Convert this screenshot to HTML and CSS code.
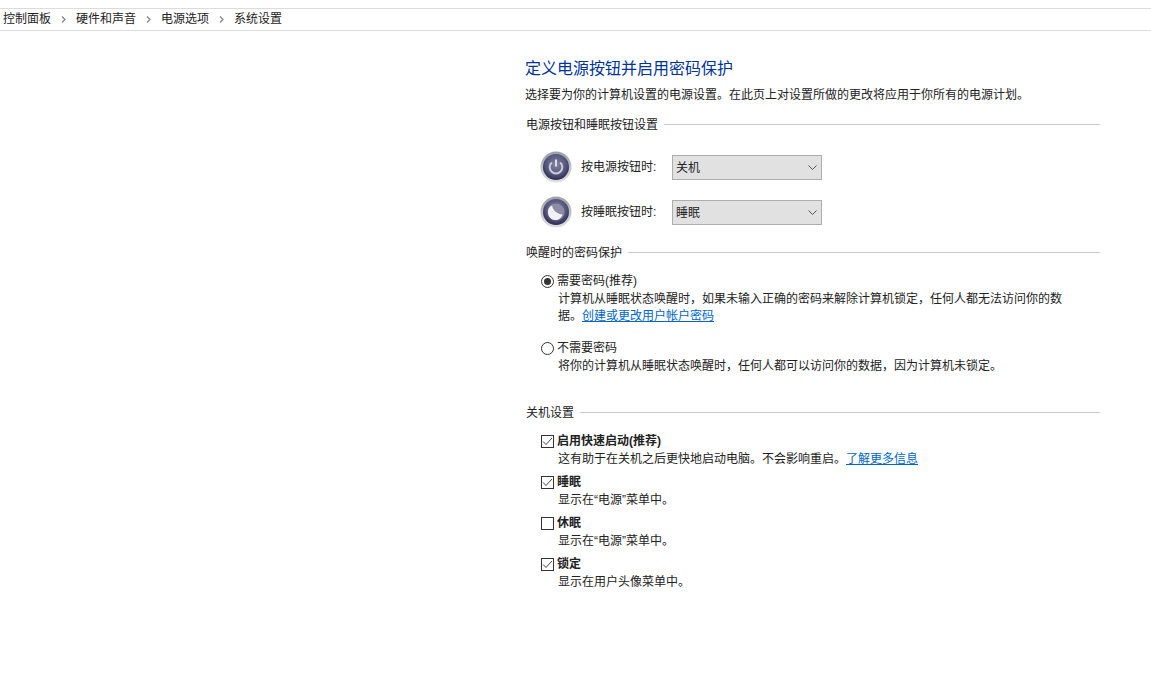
FILE: index.html
```html
<!DOCTYPE html>
<html lang="zh-CN">
<head>
    <meta charset="UTF-8">
    <title>系统设置</title>
    <link rel="stylesheet" href="styles.css">
</head>
<body>
    <div class="breadcrumb">
        <span>控制面板</span>
        <svg class="crumb-sep" width="5" height="7" viewBox="0 0 5 7"><path d="M1 0.5 L4 3.5 L1 6.5" fill="none" stroke="#888" stroke-width="1.3"/></svg>
        <span>硬件和声音</span>
        <svg class="crumb-sep" width="5" height="7" viewBox="0 0 5 7"><path d="M1 0.5 L4 3.5 L1 6.5" fill="none" stroke="#888" stroke-width="1.3"/></svg>
        <span>电源选项</span>
        <svg class="crumb-sep" width="5" height="7" viewBox="0 0 5 7"><path d="M1 0.5 L4 3.5 L1 6.5" fill="none" stroke="#888" stroke-width="1.3"/></svg>
        <span>系统设置</span>
    </div>

    <div class="content">
        <h1>定义电源按钮并启用密码保护</h1>
        <p class="intro">选择要为你的计算机设置的电源设置。在此页上对设置所做的更改将应用于你所有的电源计划。</p>

        <div class="group-title group-buttons"><span>电源按钮和睡眠按钮设置</span></div>

        <div class="power-row">
            <svg class="orb" width="32" height="32" viewBox="0 0 32 32">
                <defs>
                    <radialGradient id="orbFill" cx="50%" cy="40%" r="60%">
                        <stop offset="0" stop-color="#85869f"/>
                        <stop offset="0.65" stop-color="#55567c"/>
                        <stop offset="1" stop-color="#2b2c4c"/>
                    </radialGradient>
                    <linearGradient id="orbRim" x1="0" y1="0" x2="0" y2="1">
                        <stop offset="0" stop-color="#9d9ea8"/>
                        <stop offset="1" stop-color="#e0e0e6"/>
                    </linearGradient>
                </defs>
                <circle cx="16" cy="16" r="15.5" fill="url(#orbRim)"/>
                <circle cx="16" cy="16" r="13" fill="url(#orbFill)"/>
                <path d="M11.8 11.5 A6.3 6.3 0 1 0 20.2 11.5" fill="none" stroke="#c9cad8" stroke-width="2"/>
                <path d="M16 8.5 V15.5" stroke="#dcdde8" stroke-width="2"/>
            </svg>
            <span class="power-label">按电源按钮时:</span>
            <div class="select"><span>关机</span>
                <svg width="9" height="6" viewBox="0 0 9 6"><path d="M0.5 0.5 L4.5 4.5 L8.5 0.5" fill="none" stroke="#555" stroke-width="1"/></svg>
            </div>
        </div>
        <div class="power-row">
            <svg class="orb" width="32" height="32" viewBox="0 0 32 32">
                <circle cx="16" cy="16" r="15.5" fill="url(#orbRim)"/>
                <circle cx="16" cy="16" r="13" fill="url(#orbFill)"/>
                <circle cx="16" cy="16" r="8.5" fill="#8b8ca6"/>
                <path d="M12 9.5 C13 14 16.5 18 22.5 18.5 C21.5 22 18.5 24 15.5 24 C11 24 8 20.5 8 16 C8 13 9.5 10.5 12 9.5 Z" fill="#f1f1f6"/>
            </svg>
            <span class="power-label">按睡眠按钮时:</span>
            <div class="select"><span>睡眠</span>
                <svg width="9" height="6" viewBox="0 0 9 6"><path d="M0.5 0.5 L4.5 4.5 L8.5 0.5" fill="none" stroke="#555" stroke-width="1"/></svg>
            </div>
        </div>

        <div class="group-title group-password"><span>唤醒时的密码保护</span></div>

        <div class="option option-first">
            <span class="radio checked"></span>
            <div class="option-label">需要密码(推荐)</div>
        </div>
        <p class="desc">计算机从睡眠状态唤醒时，如果未输入正确的密码来解除计算机锁定，任何人都无法访问你的数据。<a href="#">创建或更改用户帐户密码</a></p>

        <div class="option option-second">
            <span class="radio"></span>
            <div class="option-label">不需要密码</div>
        </div>
        <p class="desc">将你的计算机从睡眠状态唤醒时，任何人都可以访问你的数据，因为计算机未锁定。</p>

        <div class="group-title group-shutdown"><span>关机设置</span></div>

        <div class="option check-first">
            <span class="check on"><svg width="11" height="9" viewBox="0 0 11 9"><path d="M1 4.5 L4 7.5 L10 1" fill="none" stroke="#444" stroke-width="1"/></svg></span>
            <div class="option-label bold">启用快速启动(推荐)</div>
        </div>
        <p class="desc">这有助于在关机之后更快地启动电脑。不会影响重启。<a href="#">了解更多信息</a></p>

        <div class="option check-next">
            <span class="check on"><svg width="11" height="9" viewBox="0 0 11 9"><path d="M1 4.5 L4 7.5 L10 1" fill="none" stroke="#444" stroke-width="1"/></svg></span>
            <div class="option-label bold">睡眠</div>
        </div>
        <p class="desc">显示在“电源”菜单中。</p>

        <div class="option check-next">
            <span class="check"></span>
            <div class="option-label bold">休眠</div>
        </div>
        <p class="desc">显示在“电源”菜单中。</p>

        <div class="option check-next">
            <span class="check on"><svg width="11" height="9" viewBox="0 0 11 9"><path d="M1 4.5 L4 7.5 L10 1" fill="none" stroke="#444" stroke-width="1"/></svg></span>
            <div class="option-label bold">锁定</div>
        </div>
        <p class="desc">显示在用户头像菜单中。</p>
    </div>
</body>
</html>
```

FILE: styles.css
```css
body { font-family: "Liberation Sans", "Noto Sans CJK SC", sans-serif; font-size: 12px; margin: 0; padding: 0; background-color: #fff; color: #222; height: 677px; overflow: hidden; }
.breadcrumb { display: flex; align-items: center; height: 21px; margin-top: 8px; padding-left: 3px; line-height: 16px; border-top: 1px solid #dcdcdc; border-bottom: 1px solid #dcdcdc; }
.breadcrumb span { margin-top: -2px; }
.crumb-sep { margin: -1px 10px 0; }
.content { width: 575px; margin-left: 525px; }
h1 { margin: 28px 0 0; font-size: 16px; font-weight: normal; line-height: 20px; color: #003399; }
.intro { margin: 6px 0 0; line-height: 20px; }
.group-title { display: flex; align-items: center; gap: 6px; margin-left: 1px; height: 18px; line-height: 18px; }
.group-title span { margin-top: 2px; }
.group-title::after { content: ""; flex: 1; border-top: 1px solid #c8c8c8; }
.group-buttons { margin-top: 10px; }
.group-password { margin-top: 8px; }
.group-shutdown { margin-top: 28px; }
.power-row { display: flex; align-items: center; height: 45px; padding-left: 15px; }
.group-buttons + .power-row { margin-top: 12px; }
.orb { flex: none; margin-top: -2px; }
.power-label { width: 91px; margin-left: 9px; line-height: 16px; margin-top: -2px; }
.select { display: flex; align-items: center; justify-content: space-between; box-sizing: border-box; width: 150px; height: 25px; padding: 0 4px 0 3px; background-color: #e1e1e1; border: 1px solid #adadad; }
.select span { line-height: 16px; }
.option { display: flex; align-items: center; height: 18px; padding-left: 16px; }
.option-first { margin-top: 11px; }
.option-second { margin-top: 14px; }
.check-first { margin-top: 11px; }
.check-next { margin-top: 5px; }
.option-label { margin-left: 3px; line-height: 18px; }
.bold { font-weight: bold; }
.radio { box-sizing: border-box; width: 13px; height: 13px; margin-top: 1px; border: 1px solid #333; border-radius: 50%; background-color: #fff; position: relative; }
.radio.checked::after { content: ""; position: absolute; left: 2px; top: 2px; width: 7px; height: 7px; border-radius: 50%; background-color: #333; }
.check { display: flex; align-items: center; justify-content: center; box-sizing: border-box; width: 13px; height: 13px; border: 1px solid #333; background-color: #fff; }
.desc { margin: 1px 0 0; padding-left: 33px; width: 510px; line-height: 17px; }
a { color: #0066cc; text-decoration: underline; }
```
